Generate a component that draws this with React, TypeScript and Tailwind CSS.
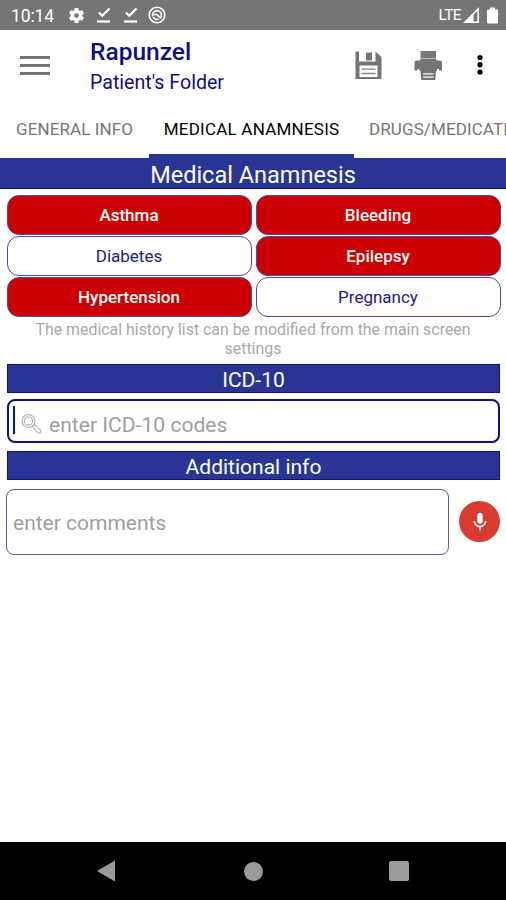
import { useState } from "react";

const CONDITIONS = ["Asthma", "Bleeding", "Diabetes", "Epilepsy", "Hypertension", "Pregnancy"];

function StatusBar() {
  return (
    <div className="flex h-[30px] shrink-0 items-center bg-[#757575] pl-[11px] pr-[8px] text-white">
      <span className="w-[56px] pt-px text-[17.5px] leading-[30px] tracking-[-0.1px]">10:14</span>
      <svg className="h-[19px] w-[19px]" viewBox="0 0 24 24" fill="currentColor">
        <path d="M19.14 12.94c.04-.3.06-.61.06-.94 0-.32-.02-.64-.07-.94l2.03-1.58a.49.49 0 0 0 .12-.61l-1.92-3.32a.49.49 0 0 0-.59-.22l-2.39.96c-.5-.38-1.03-.7-1.62-.94l-.36-2.54a.48.48 0 0 0-.48-.41h-3.84a.47.47 0 0 0-.47.41l-.36 2.54c-.59.24-1.13.57-1.62.94l-2.39-.96a.48.48 0 0 0-.59.22L2.74 8.87c-.12.21-.08.47.12.61l2.03 1.58c-.05.3-.09.63-.09.94s.02.64.07.94l-2.03 1.58a.49.49 0 0 0-.12.61l1.92 3.32c.12.22.37.29.59.22l2.39-.96c.5.38 1.03.7 1.62.94l.36 2.54c.05.24.24.41.48.41h3.84c.24 0 .44-.17.47-.41l.36-2.54c.59-.24 1.13-.56 1.62-.94l2.39.96c.22.08.47 0 .59-.22l1.92-3.32a.48.48 0 0 0-.12-.61zM12 15a3 3 0 1 1 0-6 3 3 0 0 1 0 6z" />
      </svg>
      <CheckLine className="ml-[8px]" />
      <CheckLine className="ml-[9px]" />
      <svg className="ml-[9px] h-[18px] w-[18px]" viewBox="0 0 18 18" fill="none" stroke="currentColor">
        <circle cx="9" cy="9" r="7.8" strokeWidth="1.6" />
        <path d="M4.8 10.300A4.400 4.400 0 1 1 12.500 11.700M5.200 11A4.400 4.400 0 0 0 10.500 13.100" strokeWidth="1.600" />
        <path d="M6.200 9.300c1.200-1.500 2.300-1.200 3.200-.2l3.600 3.400" strokeWidth="1.700" />
      </svg>
      <span className="ml-auto text-[15.5px] leading-[30px] tracking-[-0.6px]">LTE</span>
      <svg className="ml-[2px] h-[17px] w-[17px]" viewBox="0 0 17 17">
        <path d="M15.200 2v13.200H2z" fill="none" stroke="currentColor" strokeWidth="1.600" />
        <path d="M10.500 6.500V15H2z" fill="currentColor" />
      </svg>
      <svg className="ml-[7px] h-[17px] w-[11px]" viewBox="0 0 11 17" fill="currentColor">
        <path d="M3 .5h5v2h2a1 1 0 0 1 1 1V15.500a1 1 0 0 1-1 1H1a1 1 0 0 1-1-1v-12a1 1 0 0 1 1-1h2z" />
      </svg>
    </div>
  );
}

function CheckLine({ className }: { className: string }) {
  return (
    <svg className={`h-[18px] w-[18px] ${className}`} viewBox="0 0 18 18" fill="none" stroke="currentColor">
      <path d="M4.800 6.500l3.500 3.300 7.200-7.300" strokeWidth="2.200" />
      <path d="M3 15.500h13" strokeWidth="2.300" />
    </svg>
  );
}

function Header() {
  return (
    <header className="flex h-[70px] shrink-0 items-center pl-[20px] pr-[23px]">
      <button className="flex w-[30px] flex-col gap-[5px]">
        <span className="h-[3px] w-full bg-[#757575]" />
        <span className="h-[3px] w-full bg-[#757575]" />
        <span className="h-[3px] w-full bg-[#757575]" />
      </button>
      <div className="ml-[40px] flex-1 pt-[4px] text-[#10107f]">
        <h1 className="text-[24.5px] font-medium leading-[30px]">Rapunzel</h1>
        <p className="text-[19.6px] leading-[31px]">Patient's Folder</p>
      </div>
      <svg className="h-[29px] w-[28px]" viewBox="0 0 28 29">
        <path d="M1.500.500H21.500L27.500 6v22H1.500z" fill="#757575" />
        <path d="M5 0H21.500v10.500H5z" fill="#fff" />
        <path d="M12 1.500h6v8h-6z" fill="#757575" />
        <path d="M5.500 14.500h18v11.500h-18z" fill="#fff" />
        <path d="M7.500 18.200h14M7.500 22.500h14" stroke="#858585" strokeWidth="1.300" />
      </svg>
      <svg className="ml-[31px] h-[31px] w-[30px]" viewBox="0 0 30 31">
        <path d="M7.500 1h15.500v7.500H7.500z" fill="#7c7875" />
        <path d="M1.500 12.500a2 2 0 0 1 2-2H6a1.500 1.500 0 0 0 1.500-1.500h15.500a1.500 1.500 0 0 0 1.500 1.500H27a2 2 0 0 1 2 2V20.500h-3V19H4.500v1.500h-3z" fill="#757575" />
        <path d="M6 20h18.500v11H6z" fill="#fff" />
        <path d="M6.500 19h17.500v2H6.500z" fill="#757575" />
        <path d="M7.500 21h15.500l-.7 9h-14z" fill="#757575" />
        <path d="M10 23h10.500v1.800H10zM10 26.300h10.500V28H10z" fill="#d5d5d5" />
      </svg>
      <svg className="ml-[34px] h-[22px] w-[6px]" viewBox="0 0 6 22">
        <circle cx="3" cy="3.500" r="2.600" />
        <circle cx="3" cy="10.700" r="2.600" />
        <circle cx="3" cy="18" r="2.600" />
      </svg>
    </header>
  );
}

function Tabs() {
  return (
    <nav className="flex h-[58px] shrink-0 overflow-hidden whitespace-nowrap text-[17px] leading-[58px] text-[#757575]">
      <button className="w-[149px] shrink-0 tracking-[0.1px]">GENERAL INFO</button>
      <button className="w-[205px] shrink-0 border-b-4 border-[#283593] leading-[58px] tracking-[0.23px] text-black">
        MEDICAL ANAMNESIS
      </button>
      <button className="shrink-0 pl-[15px] tracking-[0.1px]">DRUGS/MEDICATIONS</button>
    </nav>
  );
}

function ConditionGrid() {
  const [selected, setSelected] = useState(["Asthma", "Bleeding", "Epilepsy", "Hypertension"]);

  const toggle = (name: string) =>
    setSelected((s) => (s.includes(name) ? s.filter((n) => n !== name) : [...s, name]));

  return (
    <div className="grid grid-cols-2 gap-x-[4px] gap-y-px pl-[7px] pr-[5px] pt-[6px]">
      {CONDITIONS.map((name) => (
        <button
          key={name}
          onClick={() => toggle(name)}
          className={`h-[40px] rounded-[12px] border border-[#4a4a9e] pr-px text-[17px] leading-[38px] ${
            selected.includes(name) ? "bg-[#cc0000] font-medium text-white" : "bg-white text-[#20207f]"
          }`}
        >
          {name}
        </button>
      ))}
    </div>
  );
}

function SectionTitle({ children }: { children: string }) {
  return (
    <h2 className="ml-[7px] mr-[6px] h-[29px] border border-[#10107f] bg-[#283593] pt-px text-center text-[21px] leading-[28px] text-white">
      {children}
    </h2>
  );
}

export default function App() {
  return (
    <div className="flex h-[900px] w-[506px] flex-col overflow-hidden bg-white font-[Roboto,sans-serif]">
      <StatusBar />
      <Header />
      <Tabs />
      <main className="flex-1">
        <h2 className="h-[31px] border-b border-[#10107f] bg-[#283593] pt-px text-center text-[23.5px] leading-[32px] text-white">
          Medical Anamnesis
        </h2>
        <ConditionGrid />
        <p className="px-[30px] pb-[6px] pt-[3px] text-center text-[15.9px] leading-[19px] text-[#a8a8a8]">
          The medical history list can be modified from the main screen settings
        </p>
        <SectionTitle>ICD-10</SectionTitle>
        <div className="mb-[8px] ml-[7px] mr-[6px] mt-[6px] flex h-[44px] items-center rounded-[8px] border-2 border-[#10107f] pl-[4px]">
          <span className="mb-[2px] h-[28px] w-[2px] bg-[#10107f]" />
          <svg className="ml-[6px] mt-[6px] h-[22px] w-[22px]" viewBox="0 0 22 22" fill="none" stroke="#b0b0b0">
            <circle cx="7.500" cy="8" r="5.300" strokeWidth="3.400" />
            <circle cx="7.500" cy="8" r="5.300" stroke="#f2f2f2" strokeWidth="1.400" />
            <path d="M11.500 13.500l2-2 6 5.800a1.800 1.800 0 0 1-2.500 2.500z" fill="#fff" strokeWidth="1.200" />
          </svg>
          <input
            className="ml-[6px] mt-[7px] min-w-0 flex-1 text-[21.1px] outline-none placeholder:text-[#9e9e9e]"
            placeholder="enter ICD-10 codes"
          />
        </div>
        <SectionTitle>Additional info</SectionTitle>
        <div className="flex items-center pl-[6px] pr-[6px] pt-[9px]">
          <div className="flex h-[66px] w-[443px] items-center rounded-[8px] border border-[#5c5ca6] pl-[6px]">
            <input
              className="mt-[3px] w-full text-[21px] outline-none placeholder:text-[#9e9e9e]"
              placeholder="enter comments"
            />
          </div>
          <button className="mb-px ml-auto flex h-[41px] w-[41px] items-center justify-center rounded-full bg-[#d93b30]">
            <svg className="h-[22px] w-[22px]" viewBox="0 0 24 24" fill="#fff">
              <path d="M12 14c1.660 0 3-1.340 3-3V5c0-1.660-1.340-3-3-3S9 3.340 9 5v6c0 1.660 1.340 3 3 3z" />
              <path d="M17.300 11c0 3-2.540 5.100-5.300 5.100S6.700 14 6.700 11H5c0 3.410 2.720 6.230 6 6.720V21h2v-3.280c3.280-.48 6-3.300 6-6.720h-1.700z" />
            </svg>
          </button>
        </div>
      </main>
      <footer className="flex h-[58px] shrink-0 items-center bg-black">
        <svg className="ml-[96px] h-[22px] w-[20px]" viewBox="0 0 20 22" fill="#9b9b9b">
          <path d="M1 11L19 .5v21z" />
        </svg>
        <span className="ml-[128px] h-[19px] w-[19px] rounded-full bg-[#9b9b9b]" />
        <span className="ml-[126px] h-[20px] w-[20px] rounded-[2px] bg-[#9b9b9b]" />
      </footer>
    </div>
  );
}
